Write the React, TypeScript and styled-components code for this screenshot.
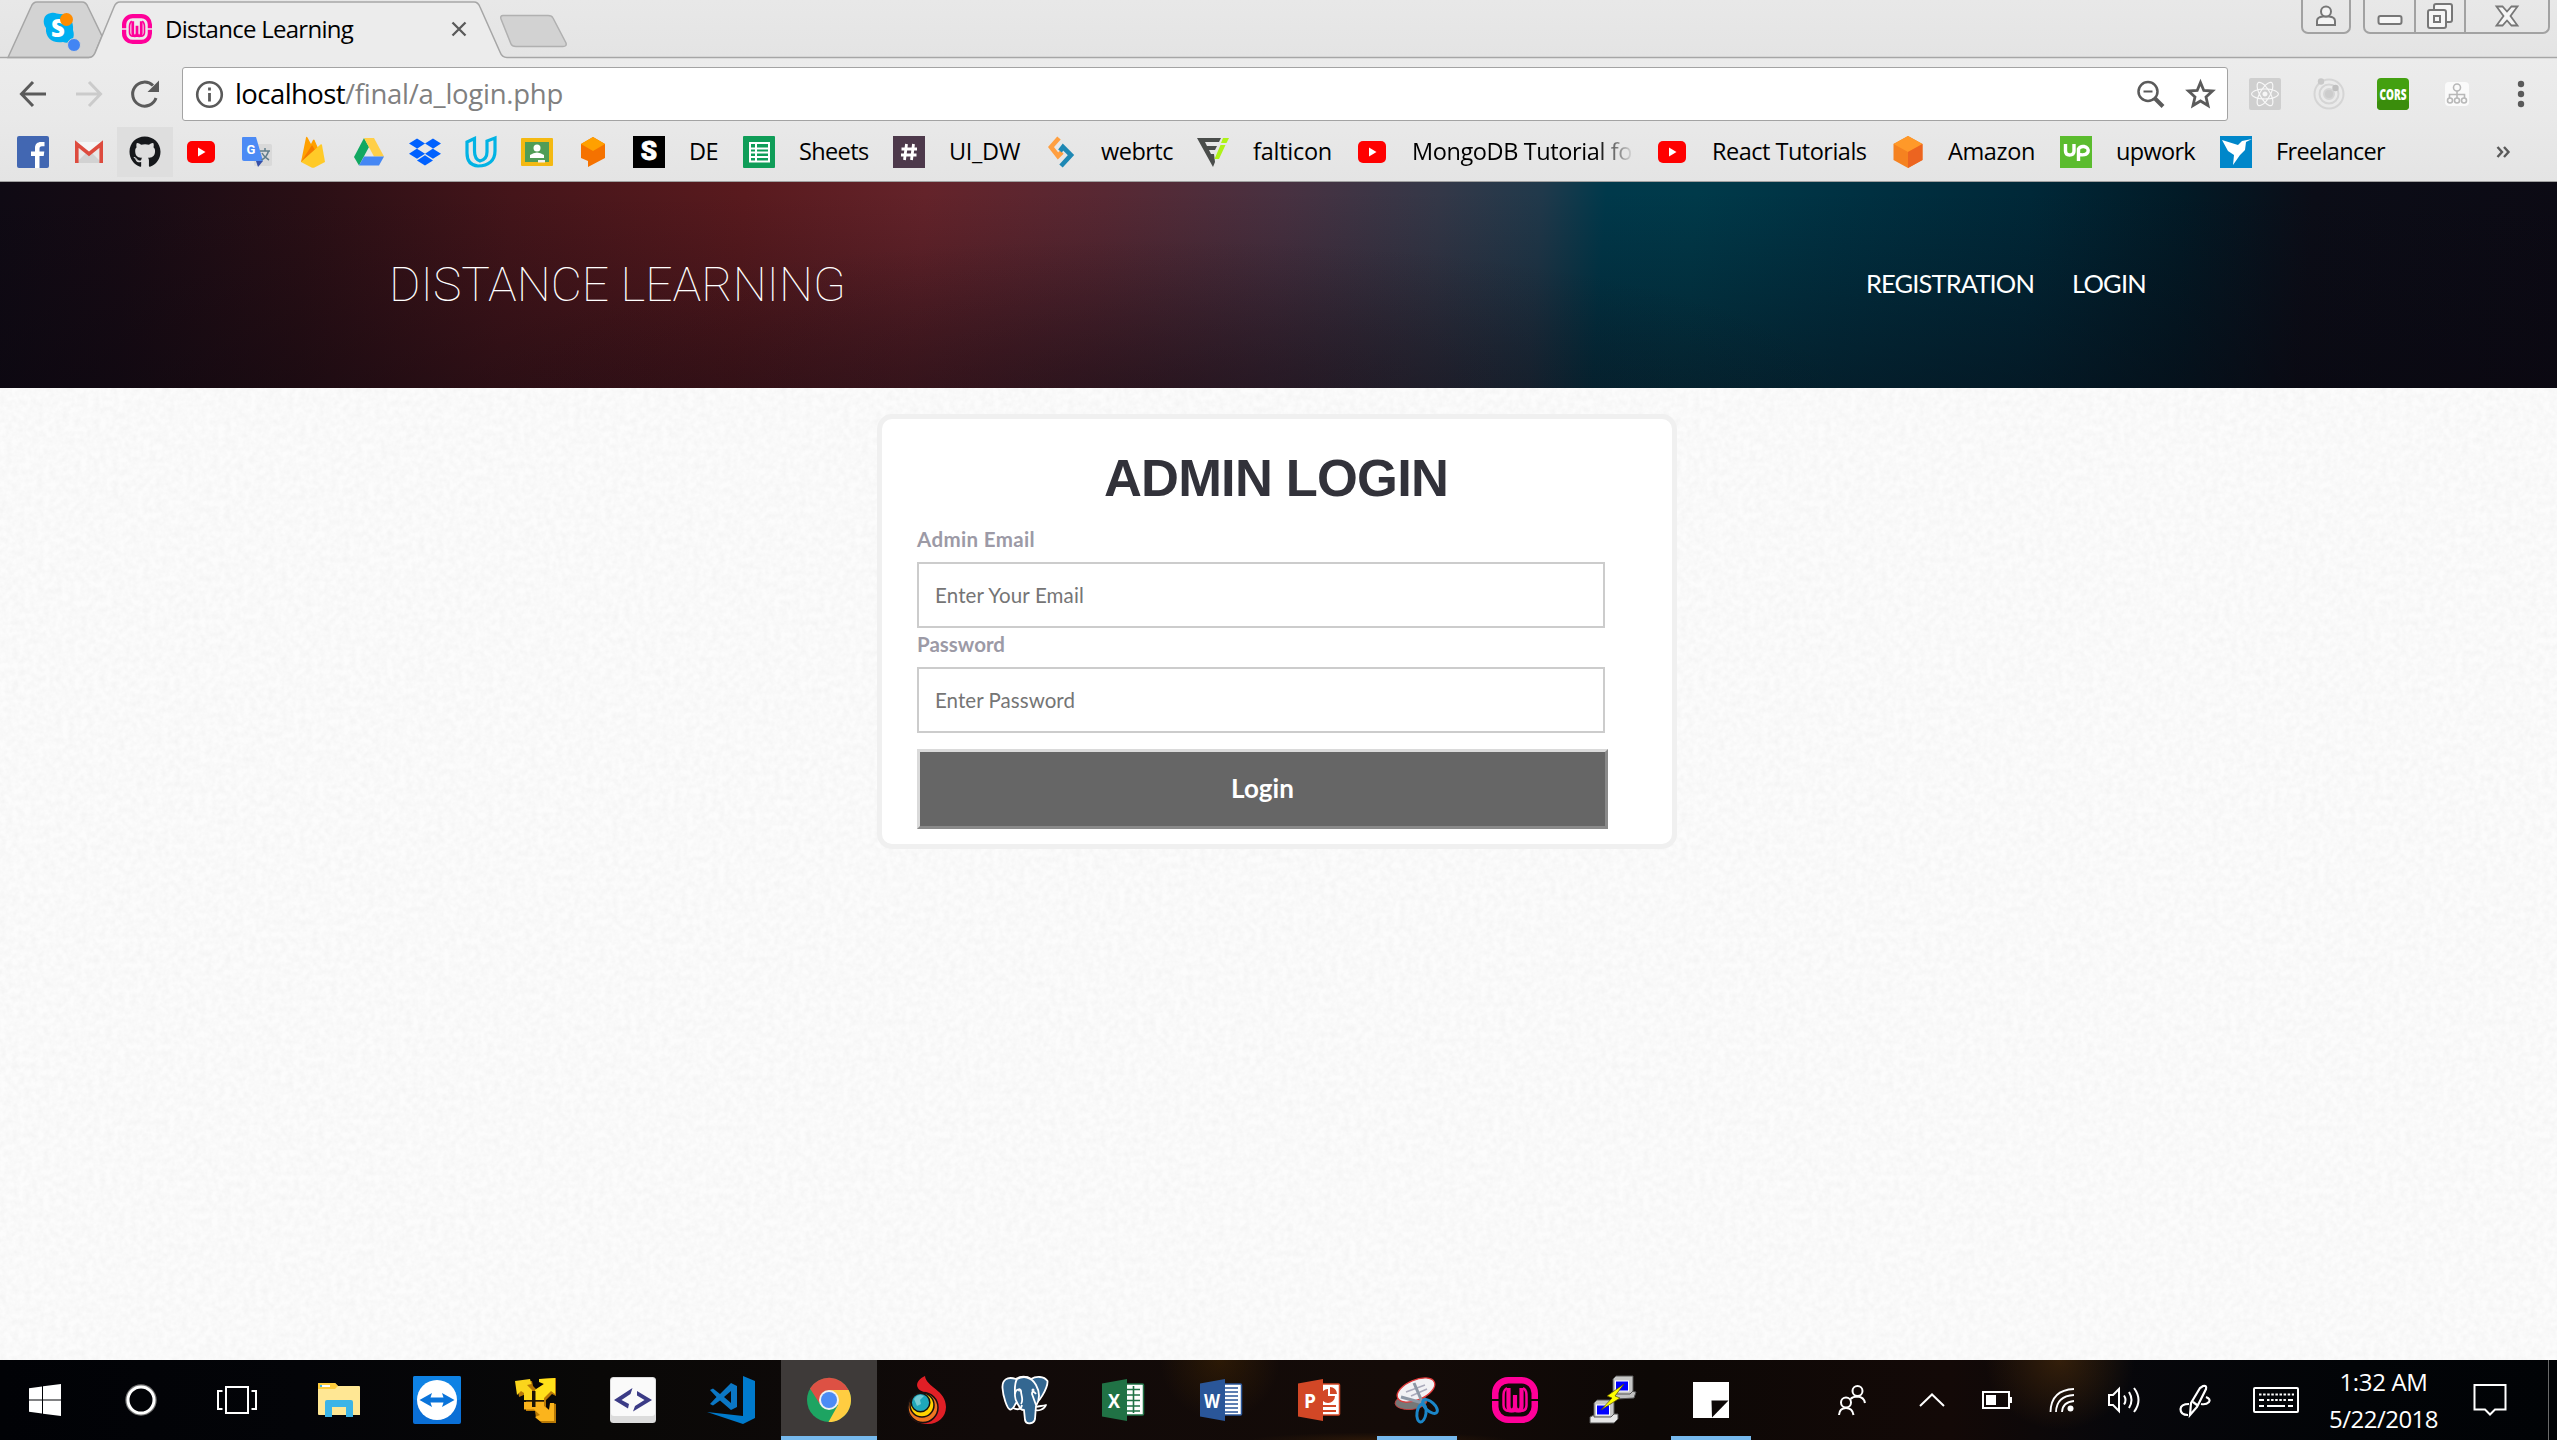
import React, { useLayoutEffect, useRef, useState } from "react";
import styled, { createGlobalStyle, css } from "styled-components";
import { FaGithub, FaDropbox, FaReact } from "react-icons/fa";

const uiFont = `"Open Sans", "Noto Sans", sans-serif`;
const pageFont = `Lato, "Open Sans", sans-serif`;

const GlobalStyle = createGlobalStyle`
  * { box-sizing: border-box; }
  html, body { margin: 0; padding: 0; overflow: hidden; background: #fafafa; }
  svg { display: block; flex: none; overflow: visible; }
`;

/* Text whose tracking is adjusted so that it fills a given width. */
const FitBox = styled.span<{ $w: number; $size: number; $color?: string; $weight?: number; $font?: string; $fade?: boolean }>`
  display: block;
  flex: none;
  width: ${(p) => p.$w}px;
  font-family: ${(p) => p.$font || uiFont};
  font-size: ${(p) => p.$size}px;
  font-weight: ${(p) => p.$weight || 400};
  color: ${(p) => p.$color || "#000"};
  line-height: 1.3;
  white-space: pre;
  ${(p) =>
    p.$fade &&
    css`
      mask-image: linear-gradient(90deg, #000 84%, transparent 101%);
    `}
`;

type FitProps = {
  text: string;
  w: number;
  fit?: number;
  size: number;
  color?: string;
  weight?: number;
  font?: string;
  fade?: boolean;
};

function Fit({ text, w, fit, size, color, weight, font, fade }: FitProps) {
  const ref = useRef<HTMLSpanElement>(null);
  const [spacing, setSpacing] = useState(0);
  useLayoutEffect(() => {
    if (!ref.current) return;
    const natural = ref.current.getBoundingClientRect().width;
    setSpacing(((fit || w) - natural) / text.length);
  }, [text, w, fit]);
  return (
    <FitBox $w={w} $size={size} $color={color} $weight={weight} $font={font} $fade={fade}>
      <span ref={ref} style={{ letterSpacing: spacing }}>
        {text}
      </span>
    </FitBox>
  );
}

const Screen = styled.div`
  width: 2557px;
  height: 1440px;
  display: flex;
  flex-direction: column;
  overflow: hidden;
  font-family: ${uiFont};
`;

/* ---------- browser chrome ---------- */
const Chrome = styled.div`
  flex: none;
  height: 182px;
  display: flex;
  flex-direction: column;
  border-bottom: 1px solid #a0a0a0;
  background: linear-gradient(#e8e8e8 0, #e4e4e4 56px, #ececec 58px, #e9e9e9 118px, #e4e4e4 181px);
`;
const TabStrip = styled.div`
  position: relative;
  height: 58px;
  flex: none;
  display: flex;
  justify-content: space-between;
  align-items: flex-start;
`;
const TabShapes = styled.svg`
  position: absolute;
  left: 0;
  top: 0;
`;
const TabContent = styled.div`
  position: relative;
  display: flex;
  align-items: center;
  height: 58px;
  padding-left: 43px;
`;
const SkypeSlot = styled.div`
  width: 79px;
  padding-top: 8px;
`;
const TabTitle = styled.div`
  margin-left: 13px;
  width: 286px;
`;
const WindowButtons = styled.div`
  position: relative;
  display: flex;
  gap: 12px;
  margin-right: 7px;
`;
const ButtonGroup = styled.div`
  height: 34px;
  display: flex;
  border: 2px solid #a2a2a2;
  border-top: 0;
  border-radius: 0 0 7px 7px;
`;
const WindowButton = styled.div<{ $w: number }>`
  width: ${(p) => p.$w}px;
  display: flex;
  justify-content: center;
  align-items: center;
  & + & {
    border-left: 2px solid #a2a2a2;
  }
`;
const Toolbar = styled.div`
  height: 64px;
  display: flex;
  align-items: center;
  padding-top: 8px;
  padding-left: 18px;
`;
const NavButton = styled.div<{ $w: number }>`
  width: ${(p) => p.$w}px;
`;
const AddressBar = styled.div`
  width: 2046px;
  height: 54px;
  display: flex;
  align-items: center;
  padding: 0 11px 0 12px;
  background: #fff;
  border: 1px solid #a3a3a3;
  border-radius: 3px;
`;
const Spacer = styled.div`
  flex: 1;
`;
const UrlText = styled.div`
  display: flex;
  margin-left: 11px;
`;
const StarSlot = styled.div`
  margin-left: 20px;
`;
const Extensions = styled.div`
  display: flex;
  align-items: center;
  margin-left: 21px;
  gap: 32px;
`;
const MenuSlot = styled.div`
  margin-left: 12px;
`;
const Bookmarks = styled.div`
  flex: 1;
  display: flex;
  align-items: center;
  gap: 24px;
  padding: 0 46px 0 17px;
`;
const Bookmark = styled.div<{ $hover?: boolean; $labelled?: boolean }>`
  display: flex;
  align-items: center;
  gap: 24px;
  ${(p) =>
    p.$hover &&
    css`
      background: #dedede;
      margin: 0 -12px;
      padding: 9px 12px;
    `}
`;

function TabBackground() {
  return (
    <TabShapes width="2557" height="60" viewBox="0 0 2557 60" fill="none">
      <path d="M8 57.5 L31 7 Q33 2 37 2 H82 Q86 2 88 7 L102 36 L95 53 Q93 57.5 89 57.5 Z" fill="#d3d3d3" stroke="#a6a6a6" strokeWidth="1.5" />
      <path d="M89 60 V57.5 Q93 57.5 95 53 L114 7 Q116 2 120 2 H474 Q478 2 480 7 L500 52 Q502 57.5 507 57.5 V60Z" fill="#ececec" />
      <path d="M0 57.5 H89 Q93 57.5 95 53 L114 7 Q116 2 120 2 H474 Q478 2 480 7 L500 52 Q502 57.5 507 57.5 H2557" stroke="#a6a6a6" strokeWidth="1.5" />
      <path d="M503 15.500 H548 Q552 15.500 553 18 L566 43 Q567 46.500 563 46.500 H516 Q512 46.500 511 44 L501 19 Q500 15.500 503 15.500Z" fill="#d2d2d2" stroke="#b0b0b0" strokeWidth="1.5" />
    </TabShapes>
  );
}

function SkypeIcon() {
  return (
    <svg width="38" height="40" viewBox="0 0 38 40">
      <path d="M8 0 C12 -1 14 1 17 1 C26 1 31 8 30 17 C33 26 27 32 20 29 C9 31 2 24 3 15 C-1 10 0 1 8 0Z" fill="#00aff0" />
      <text x="15" y="24" textAnchor="middle" fontFamily="Open Sans" fontWeight="800" fontSize="24" fill="#fff">S</text>
      <circle cx="23.500" cy="6.500" r="6.500" fill="#ff8c00" />
      <circle cx="31" cy="32" r="6.500" fill="#4285f4" stroke="#d3d3d3" />
    </svg>
  );
}

function WampIcon({ size, gap }: { size: number; gap: string }) {
  return (
    <svg width={size} height={size} viewBox="0 0 46 46">
      <rect x="3.250" y="3.250" width="39.500" height="39.500" rx="13" fill="none" stroke="#ff0099" strokeWidth="6.500" />
      <path d="M15 11 C11.500 13 11.500 16 11.500 20 V28 Q11.500 34 17 34 H29 Q34.500 34 34.500 28 V20 C34.500 16 34.500 13 31 11" fill="none" stroke="#ff0099" strokeWidth="2.500" />
      <path d="M16.500 11 V29 Q16.500 33.500 19.500 33.500 Q23 33.500 23 29 V18 V29 Q23 33.500 26.500 33.500 Q29.500 33.500 29.500 29 V11" fill="none" stroke="#ff0099" strokeWidth="4.200" />
      <path d="M0 23 H9.500 M36.500 23 H46" stroke={gap} strokeWidth="2" />
    </svg>
  );
}

const YouTube = () => (
  <svg width="32" height="32" viewBox="0 0 32 32">
    <rect x="2" y="5" width="28" height="22" rx="5" fill="#f00" />
    <path d="M13 11.500 L20.500 16 L13 20.500Z" fill="#fff" />
  </svg>
);

const bookmarkIcons: Record<string, React.ReactNode> = {
  facebook: (
    <svg width="32" height="32" viewBox="0 0 32 32">
      <rect width="32" height="32" rx="2" fill="#4267b2" />
      <path d="M18 32 V20 H14 V15.500 H18 V12 C18 8 20.500 6 24 6 H27.500 V10.300 H25 C23 10.300 22.500 11.200 22.500 12.700 V15.500 H27.300 L26.700 20 H22.500 V32Z" fill="#fff" />
    </svg>
  ),
  gmail: (
    <svg width="32" height="32" viewBox="0 0 32 32">
      <path d="M3 6 H29 V27 H3Z" fill="#e8e8e8" />
      <path d="M3 27 L16 14 L29 27Z" fill="#d2d2d2" />
      <path d="M3 6 H29 L16 17Z" fill="#f5f5f5" />
      <path d="M3.800 27 V8 L16 18 L28.200 8 V27" fill="none" stroke="#dd4b3e" strokeWidth="3.600" />
    </svg>
  ),
  github: <FaGithub size={32} color="#16181b" />,
  youtube: <YouTube />,
  translate: (
    <svg width="32" height="32" viewBox="0 0 32 32">
      <rect x="13" y="8" width="18" height="22" rx="1.500" fill="#d9d9d9" />
      <path d="M15 25 H22 L17 31Z" fill="#3650a8" />
      <path d="M2 1 H15 L22 25 H3 Q1 25 1 23 V2 Q1 1 2 1Z" fill="#4c8bf5" />
      <path d="M19 15 H29 M24 12 V15 M27.500 15 Q26 21 20.500 24 M21 17 Q23 21 28 24" stroke="#607d8b" strokeWidth="1.500" fill="none" />
      <text x="10" y="18" textAnchor="middle" fontFamily="Roboto" fontWeight="700" fontSize="13" fill="#fff">G</text>
    </svg>
  ),
  firebase: (
    <svg width="32" height="32" viewBox="0 0 32 32">
      <path d="M4 26 L9 1.500 Q9.500 0 10.500 1.500 L14 8 L16 4 Q17 3 17.500 4 L27 26Z" fill="#ffa000" />
      <path d="M4 26 L15 9 L18 14Z" fill="#f57c00" />
      <path d="M4 26 L23.500 8.500 Q24.800 8 25 9 L28 26 L17.500 31.500 Q16 32 14.500 31.500Z" fill="#ffca28" />
    </svg>
  ),
  drive: (
    <svg width="32" height="32" viewBox="0 0 32 32">
      <path d="M11 2 L1 21 L6 29.500 L16 11Z" fill="#11a861" />
      <path d="M11 2 H21 L31 20.500 H21Z" fill="#ffcf48" />
      <path d="M11 20.500 H31 L26 29.500 H6Z" fill="#4587f4" />
    </svg>
  ),
  dropbox: <FaDropbox size={32} color="#0061ff" />,
  udacity: (
    <svg width="32" height="32" viewBox="0 0 32 32" fill="none" stroke="#02b3e4" strokeWidth="3.200">
      <path d="M9.500 2.500 L2 6 V17 C2 25 6 29.500 13 30 C24 30 30 24 30 15 V2 L22 5 V16 C22 20.500 19.500 24 15 25 C10.500 23.500 9.500 19 9.500 15Z" />
    </svg>
  ),
  classroom: (
    <svg width="32" height="32" viewBox="0 0 32 32">
      <rect y="2" width="32" height="28" rx="1" fill="#f4b912" />
      <rect x="4" y="6" width="24" height="20" fill="#519d57" />
      <circle cx="16" cy="12" r="3.500" fill="#fff" />
      <path d="M9 22 V19 Q16 14 23 19 V22Z" fill="#fff" />
      <rect x="17" y="24" width="7" height="2.500" fill="#f1f1f1" />
    </svg>
  ),
  orange: (
    <svg width="32" height="32" viewBox="0 0 32 32">
      <path d="M16 1 L28 8 V22 L11 31 V25 L4 22 V8Z" fill="#f57200" />
      <path d="M16 1 L28 8 L16 15 L4 8Z" fill="#ffa000" />
    </svg>
  ),
  s: (
    <svg width="32" height="32" viewBox="0 0 32 32">
      <rect width="32" height="32" fill="#000" />
      <text x="16" y="24" textAnchor="middle" fontFamily="Roboto" fontWeight="900" fontSize="26" fill="#fff" stroke="#fff" strokeWidth="0.800">S</text>
    </svg>
  ),
  sheets: (
    <svg width="32" height="32" viewBox="0 0 32 32">
      <rect width="32" height="32" rx="1" fill="#0f9d58" />
      <path d="M7 7 H26 V25.500 H7Z M7 12.500 H26 M7 16.500 H26 M7 21 H26 M13 7 V25" fill="none" stroke="#fff" strokeWidth="2" />
    </svg>
  ),
  hash: (
    <svg width="32" height="32" viewBox="0 0 32 32">
      <rect width="32" height="32" fill="#4d394b" />
      <path d="M13.500 8 L11.500 24 M20.500 8 L18.500 24 M8.500 13 H24 M8 19 H23.500" stroke="#fff" strokeWidth="2.800" />
    </svg>
  ),
  webrtc: (
    <svg width="32" height="32" viewBox="0 0 32 32">
      <path d="M14 2 L6 11 L13 20 L17 16" fill="none" stroke="#ff9f40" strokeWidth="4.600" />
      <path d="M15 15 L18 11 L26 19 L16 30" fill="none" stroke="#1e88b4" strokeWidth="4.600" />
    </svg>
  ),
  flaticon: (
    <svg width="32" height="32" viewBox="0 0 32 32">
      <path d="M0 2 H24 L22 6 H8 L10 10 H20 L18 14 H12 L14 18 H17 L18 26 L16 31Z" fill="#4a4d4b" />
      <path d="M26 2 H32 L29.500 7 H24Z M23.500 9 H28.500 L22 23 H17.500Z" fill="#aef217" />
    </svg>
  ),
  amazon: (
    <svg width="32" height="32" viewBox="0 0 32 32">
      <path d="M16 0 L30.500 8 V24 L16 32 L1.500 24 V8Z" fill="#f58220" />
      <path d="M16 0 L30.500 8 L16 16 L1.500 8Z" fill="#ff9929" />
      <path d="M30.500 8 V24 L16 32 V16Z" fill="#ec6420" />
    </svg>
  ),
  upwork: (
    <svg width="32" height="32" viewBox="0 0 32 32">
      <rect width="32" height="32" fill="#5bbc2e" />
      <path d="M5.500 8 V15 Q5.500 19 9.500 19 Q14 19 14 15 V8 M18.500 25 V13 Q20 10 24 10.500 Q29 11.500 28 16 Q26 20 19 18.500" fill="none" stroke="#fff" strokeWidth="3.400" />
    </svg>
  ),
  freelancer: (
    <svg width="32" height="32" viewBox="0 0 32 32">
      <rect width="32" height="32" fill="#0087ca" />
      <path d="M2 4 L18 9 L22 5 L32 3 L26 6 L25 14 L20 19 L13 29 L14 19 L8 15Z" fill="#fff" />
    </svg>
  ),
};

const bookmarks: { icon: string; label?: string; w?: number; fit?: number; fade?: boolean }[] = [
  { icon: "facebook" },
  { icon: "gmail" },
  { icon: "github" },
  { icon: "youtube" },
  { icon: "translate" },
  { icon: "firebase" },
  { icon: "drive" },
  { icon: "dropbox" },
  { icon: "udacity" },
  { icon: "classroom" },
  { icon: "orange" },
  { icon: "s", label: "DE", w: 30, fit: 29 },
  { icon: "sheets", label: "Sheets", w: 70, fit: 69.5 },
  { icon: "hash", label: "UI_DW", w: 72, fit: 71 },
  { icon: "webrtc", label: "webrtc", w: 72 },
  { icon: "flaticon", label: "falticon", w: 79 },
  { icon: "youtube", label: "MongoDB Tutorial fo", w: 220, fit: 220, fade: true },
  { icon: "youtube", label: "React Tutorials", w: 156, fit: 154.5 },
  { icon: "amazon", label: "Amazon", w: 88, fit: 87 },
  { icon: "upwork", label: "upwork", w: 80, fit: 79 },
  { icon: "freelancer", label: "Freelancer", w: 110, fit: 109 },
];

function BrowserChrome() {
  return (
    <Chrome>
      <TabStrip>
        <TabBackground />
        <TabContent>
          <SkypeSlot>
            <SkypeIcon />
          </SkypeSlot>
          <WampIcon size={30} gap="#ececec" />
          <TabTitle>
            <Fit text="Distance Learning" w={188} size={24} />
          </TabTitle>
          <svg width="16" height="16" viewBox="0 0 16 16">
            <path d="M1.500 1.500 L14.500 14.500 M14.500 1.500 L1.500 14.500" stroke="#5a5a5a" strokeWidth="2.300" />
          </svg>
        </TabContent>
        <WindowButtons>
          <ButtonGroup>
            <WindowButton $w={46}>
              <svg width="22" height="22" viewBox="0 0 22 22" fill="#f4f4f4" stroke="#777" strokeWidth="2">
                <path d="M2 20 V16 Q2 12 8 11.500 H14 Q20 12 20 16 V20Z" />
                <circle cx="11" cy="6.500" r="5" />
              </svg>
            </WindowButton>
          </ButtonGroup>
          <ButtonGroup>
            <WindowButton $w={49}>
              <svg width="26" height="30" viewBox="0 0 26 30">
                <rect x="1.500" y="15" width="23" height="8" rx="2" fill="#f6f6f6" stroke="#777" strokeWidth="2" />
              </svg>
            </WindowButton>
            <WindowButton $w={50}>
              <svg width="28" height="28" viewBox="0 0 28 28" fill="#f6f6f6" stroke="#777" strokeWidth="2">
                <rect x="8" y="2" width="18" height="18" rx="2" />
                <rect x="2" y="8" width="18" height="18" rx="2" />
                <rect x="8" y="14" width="6" height="6" />
              </svg>
            </WindowButton>
            <WindowButton $w={84}>
              <svg width="24" height="22" viewBox="0 0 24 22">
                <path d="M1.500 1.500 H7.500 L12 6.500 L16.500 1.500 H22.500 L15.500 11 L22.500 20.500 H16.500 L12 15.500 L7.500 20.500 H1.500 L8.500 11Z" fill="#f6f6f6" stroke="#777" strokeWidth="1.800" />
              </svg>
            </WindowButton>
          </ButtonGroup>
        </WindowButtons>
      </TabStrip>

      <Toolbar>
        <NavButton $w={57}>
          <svg width="30" height="28" viewBox="0 0 30 28" fill="none" stroke="#5a5a5a" strokeWidth="3">
            <path d="M28 14 H4 M15 2 L3.500 14 L15 26" />
          </svg>
        </NavButton>
        <NavButton $w={56}>
          <svg width="30" height="28" viewBox="0 0 30 28" fill="none" stroke="#cbcbcb" strokeWidth="3">
            <path d="M1 14 H25 M14 2 L25.500 14 L14 26" />
          </svg>
        </NavButton>
        <NavButton $w={51}>
          <svg width="30" height="28" viewBox="0 0 30 28" fill="none" stroke="#5a5a5a" strokeWidth="3">
            <path d="M25 18 A12 12 0 1 1 22 5.500" />
            <path d="M28 0.500 V12 H16.500Z" fill="#5a5a5a" stroke="none" />
          </svg>
        </NavButton>
        <AddressBar>
          <svg width="29" height="29" viewBox="0 0 29 29">
            <circle cx="14.500" cy="14.500" r="12.300" fill="none" stroke="#5a5a5a" strokeWidth="2.600" />
            <path d="M14.500 7.500 V10.500 M14.500 13 V21.500" stroke="#5a5a5a" strokeWidth="2.800" />
          </svg>
          <UrlText>
            <Fit text="localhost" w={110} size={27.5} />
            <Fit text="/final/a_login.php" w={218} size={27.5} color="#808080" />
          </UrlText>
          <Spacer />
          <svg width="28" height="29" viewBox="0 0 28 29" fill="none" stroke="#5a5a5a">
            <circle cx="11" cy="11.500" r="9.500" strokeWidth="2.500" />
            <path d="M6.500 11.500 H15.500" strokeWidth="2" />
            <path d="M17.500 18 L26 26.500" strokeWidth="4" />
          </svg>
          <StarSlot>
            <svg width="31" height="30" viewBox="0 0 31 30">
              <path d="M15.500 3.500 L18.800 11.500 L27.500 12 L21 18 L23 26.500 L15.500 22 L8 26.500 L10 18 L3.500 12 L12.200 11.500Z" fill="none" stroke="#5a5a5a" strokeWidth="2.800" />
            </svg>
          </StarSlot>
        </AddressBar>
        <Extensions>
          <svg width="32" height="32" viewBox="0 0 32 32">
            <rect width="32" height="32" rx="2" fill="#cfcfcf" />
            <g transform="translate(2 2)">
              <FaReact size={28} color="#f7f7f7" />
            </g>
          </svg>
          <svg width="32" height="32" viewBox="0 0 32 32" fill="none" stroke="#d5d5d5" strokeWidth="2">
            <circle cx="16" cy="16" r="14.500" />
            <circle cx="16" cy="16" r="9.500" />
            <circle cx="16" cy="16" r="5" fill="#ccc" />
            <circle cx="8" cy="3.500" r="3.200" fill="#c9c9c9" stroke="none" />
            <circle cx="22.500" cy="10" r="3.200" fill="#c0c0c0" stroke="none" />
          </svg>
          <svg width="32" height="32" viewBox="0 0 32 32">
            <rect width="32" height="32" rx="4" fill="#43a010" />
            <rect y="22" width="32" height="10" rx="4" fill="#3a8d0c" />
            <text x="16" y="22" textAnchor="middle" textLength="27" lengthAdjust="spacingAndGlyphs" fontFamily="Open Sans" fontWeight="800" fontSize="16" fill="#fff">CORS</text>
          </svg>
          <svg width="32" height="32" viewBox="0 0 32 32" fill="none" stroke="#b8b8b8" strokeWidth="1.600">
            <rect x="4" y="4" width="24" height="24" rx="4" fill="#fafafa" stroke="none" />
            <circle cx="16" cy="9.500" r="3.500" />
            <path d="M16 13 V20 M8.500 20 V16.500 H23.500 V20" />
            <circle cx="9" cy="22.500" r="2.500" />
            <circle cx="16" cy="22.500" r="2.500" />
            <circle cx="23" cy="22.500" r="2.500" />
          </svg>
          <MenuSlot>
            <svg width="8" height="28" viewBox="0 0 8 28" fill="#5a5a5a">
              <circle cx="4" cy="4" r="3.200" />
              <circle cx="4" cy="14" r="3.200" />
              <circle cx="4" cy="24" r="3.200" />
            </svg>
          </MenuSlot>
        </Extensions>
      </Toolbar>

      <Bookmarks>
        {bookmarks.map((b, i) => (
          <Bookmark key={i} $hover={b.icon === "github"}>
            {bookmarkIcons[b.icon]}
            {b.label && <Fit text={b.label} w={b.w!} fit={b.fit} size={23.5} fade={b.fade} />}
          </Bookmark>
        ))}
        <Spacer />
        <svg width="15" height="12" viewBox="0 0 15 12" fill="none" stroke="#5a5a5a" strokeWidth="2.400">
          <path d="M1.500 1 L6 6 L1.500 11 M8 1 L12.500 6 L8 11" />
        </svg>
      </Bookmarks>
    </Chrome>
  );
}

/* ---------- web page ---------- */
const Page = styled.main`
  position: relative;
  flex: 1;
  display: flex;
  flex-direction: column;
  background: #fcfcfc;
`;
const PaperGrain = styled.svg`
  position: absolute;
  inset: 0;
  width: 100%;
  height: 100%;
`;
const Banner = styled.header`
  position: relative;
  flex: none;
  height: 206px;
  display: flex;
  align-items: center;
  justify-content: space-between;
  padding: 0 411px 0 389px;
  background:
    radial-gradient(ellipse 700px 150px at 1150px 206px, rgba(20, 8, 16, 0.3), transparent),
    linear-gradient(rgba(9, 6, 14, 0) 5%, rgba(9, 6, 14, 0.42) 100%),
    linear-gradient(
      94deg,
      #0f0a14 0%,
      #170b14 5%,
      #2a0f15 12%,
      #45151a 20%,
      #591a1e 29%,
      #64232a 36%,
      #582833 43%,
      #483141 50%,
      #343848 56%,
      #20394b 60%,
      #00394b 62.5%,
      #003a4a 66%,
      #003142 72%,
      #002838 79%,
      #021a26 85%,
      #0b0d17 90%,
      #0c0a14 100%
    );
`;
const Menu = styled.nav`
  display: flex;
  gap: 38px;
  padding-bottom: 2px;
`;
const Card = styled.section`
  position: relative;
  width: 800px;
  height: 435px;
  margin: 26px 0 0 877px;
  padding: 31px 35px 0;
  background: #fff;
  border: 5px solid #f0f0f0;
  border-radius: 15px;
`;
const Title = styled.h1`
  margin: 0 2px 0 0;
  text-align: center;
  font: 700 52.500px/56px "Liberation Sans", Arial, sans-serif;
  letter-spacing: -0.8px;
  color: #32323a;
`;
const FieldLabel = styled.label<{ $gap: number }>`
  display: block;
  margin-top: ${(p) => p.$gap}px;
  height: 26px;
`;
const Field = styled.div`
  width: 688px;
  height: 66px;
  margin-top: 10px;
  padding-left: 16px;
  display: flex;
  align-items: center;
  background: #fff;
  border: 2px solid #ccc;
`;
const Submit = styled.button`
  width: 691px;
  height: 80px;
  margin: 16px 0 0;
  padding: 0;
  display: flex;
  align-items: center;
  justify-content: center;
  text-align: left;
  background: #666;
  border: 3px solid;
  border-color: #dadada #8a8a8a #8a8a8a #dadada;
`;

function WebPage() {
  return (
    <Page>
      <PaperGrain>
        <filter id="grain" x="0" y="0" width="100%" height="100%">
          <feTurbulence type="fractalNoise" baseFrequency="0.16" numOctaves="3" seed="4" />
          <feColorMatrix values="0 0 0 0 0  0 0 0 0 0  0 0 0 0 0  0.05 0 0 0 -0.014" />
        </filter>
        <rect width="100%" height="100%" filter="url(#grain)" />
      </PaperGrain>
      <Banner>
        <Fit text="DISTANCE LEARNING" w={457} size={48} weight={100} color="#fff" font="Roboto, sans-serif" />
        <Menu>
          <Fit text="REGISTRATION" w={168} size={25.5} color="#fff" font={pageFont} />
          <Fit text="LOGIN" w={74} size={25.5} color="#fff" font={pageFont} />
        </Menu>
      </Banner>
      <Card>
        <Title>ADMIN LOGIN</Title>
        <FieldLabel $gap={20}>
          <Fit text="Admin Email" w={118} size={20.5} weight={700} color="#9c9aa6" font={pageFont} />
        </FieldLabel>
        <Field>
          <Fit text="Enter Your Email" w={149} size={20.5} color="#757575" font={pageFont} />
        </Field>
        <FieldLabel $gap={3}>
          <Fit text="Password" w={88} size={20.5} weight={700} color="#9c9aa6" font={pageFont} />
        </FieldLabel>
        <Field>
          <Fit text="Enter Password" w={140} size={20.5} color="#757575" font={pageFont} />
        </Field>
        <Submit>
          <Fit text="Login" w={63} size={26} weight={700} color="#fff" font={pageFont} />
        </Submit>
      </Card>
    </Page>
  );
}

/* ---------- taskbar ---------- */
const Taskbar = styled.footer`
  flex: none;
  height: 80px;
  display: flex;
  background:
    radial-gradient(ellipse 75px 70px at 2060px 0, rgba(92, 54, 12, 0.5), transparent),
    radial-gradient(circle at 1220px 0, rgba(90, 52, 0, 0.35), transparent 60px),
    radial-gradient(ellipse at 1380px 80px, rgba(74, 40, 8, 0.45), transparent 130px),
    linear-gradient(90deg, #010206 0, #030408 300px, #090807 600px, #110a09 1000px, #140b08 1400px, #0d0806 1650px, #130907 1950px, #07070b 2120px, #020407 2350px, #010306 100%);
`;
const TaskCell = styled.div<{ $w: number; $active?: boolean; $line?: number }>`
  width: ${(p) => p.$w}px;
  flex: none;
  display: flex;
  align-items: center;
  justify-content: center;
  background: ${(p) =>
    p.$line
      ? `linear-gradient(#76b9ed, #76b9ed) center bottom / ${p.$line}px 4px no-repeat${
          p.$active ? ", linear-gradient(#3e3a39, #3e3a39) center / 96px 80px no-repeat" : ""
        }`
      : "none"};
`;
const Pinned = styled.div`
  display: flex;
  margin-left: 8px;
`;
const Tray = styled.div`
  display: flex;
  margin-left: 52px;
`;
const Clock = styled.div`
  width: 151px;
  display: flex;
  flex-direction: column;
  align-items: center;
  gap: 6px;
  padding-top: 6px;
`;
const ShowDesktop = styled.div`
  margin-left: 27px;
  width: 9px;
  border-left: 1px solid #6a6a6a;
`;

const OfficeIcon = ({ color, letter, children }: { color: string; letter: string; children: React.ReactNode }) => (
  <svg width="48" height="48" viewBox="0 0 48 48">
    <rect x="25" y="8" width="19.500" height="31" rx="1" fill="#fff" stroke={color} strokeWidth="1.500" />
    {children}
    <path d="M3 7.500 L28 3 V45 L3 40.500Z" fill={color} />
    <text x="15" y="31.500" textAnchor="middle" fontFamily="Open Sans" fontWeight="700" fontSize="20" textLength={letter === "W" ? 16 : 12} lengthAdjust="spacingAndGlyphs" fill="#fff">
      {letter}
    </text>
  </svg>
);

const tasks: { key: string; line?: number; active?: boolean; icon: React.ReactNode }[] = [
  {
    key: "explorer",
    icon: (
      <svg width="48" height="48" viewBox="0 0 48 48">
        <path d="M3 8 Q3 7 4 7 H20 L23 10 H44 Q45 10 45 11 V39 H4 Q3 39 3 38Z" fill="#ffe794" />
        <path d="M3 8 Q3 7 4 7 H20 L23 10 L20 13 H3Z" fill="#ffcd3c" />
        <path d="M5 9 H15 V11 H5Z" fill="#fff" />
        <path d="M5 9 H7 V11 H5Z" fill="#3cb4e7" />
        <path d="M10 41 V26 Q10 24 12 24 H36 Q38 24 38 26 V41 H31 V31 H17 V41Z" fill="#3cb4e7" />
      </svg>
    ),
  },
  {
    key: "teamviewer",
    icon: (
      <svg width="48" height="48" viewBox="0 0 48 48">
        <rect width="48" height="48" rx="2" fill="#0a6fd6" />
        <rect width="48" height="24" rx="2" fill="#0e82e4" />
        <circle cx="24" cy="24" r="20" fill="#fff" />
        <path d="M6.500 24 L19 17 L17.500 21.500 H30.500 L29 17 L41.500 24 L29 31 L30.500 26.500 H17.500 L19 31Z" fill="#0a74da" />
      </svg>
    ),
  },
  {
    key: "vmware",
    icon: (
      <svg width="48" height="48" viewBox="0 0 48 48">
        <g transform="translate(2 0)">
          <path d="M4 7 L19 5 L20 10 L23 13 L31 8 L28 3 L43 2 V20 L39 18 L33 24 V31 L36 34 L39 27 L43 28 V47 H29 L23 42 L22 35 H13 V18 L6 21Z" fill="#b87805" />
          <path d="M2 5 L17 3 L18.500 8 L14 9 L19 14 V24 H11 V17 L8 15 L4 19Z" fill="#fbd51c" />
          <path d="M26 3 L42 2 V18 L38 15 L31 22 V24 H22 V14 L31 8 L26 6Z" fill="#ffe11a" />
          <path d="M11 26 H31 V30 L36 34 L37 27 H41 V45 H27 L22 41 L27 39 L21 33.500 H11Z" fill="#fbb41c" />
          <path d="M19 15 H22.500 V31 H19Z" fill="#1b1508" />
          <path d="M11 24.800 H31" stroke="#1b1508" strokeWidth="1.500" />
        </g>
      </svg>
    ),
  },
  {
    key: "code",
    icon: (
      <svg width="46" height="46" viewBox="0 0 46 46">
        <rect width="46" height="46" rx="3.500" fill="#dcdcdc" />
        <rect x="1" y="1" width="44" height="38" rx="3" fill="#fafafa" />
        <path d="M22.500 11 L4 23 L18 31.500 L19 27 L11.500 23 L20.500 17Z" fill="#3b3b86" />
        <path d="M27 14 L27 18.500 L34.500 23 L25 29 L23 34.500 L42 23Z" fill="#3b3b86" />
      </svg>
    ),
  },
  {
    key: "vscode",
    icon: (
      <svg width="48" height="48" viewBox="0 0 48 48">
        <path d="M36 0 L48 5 V42 L36 48 L0 36 L36 40Z" fill="#007acc" />
        <path d="M3 14 L6 12.500 L13 18 L24 7 L30 10 V31 L24 34 L13 24.500 L6 29.500 L3 28 L9.500 21Z M24 15 L17 21 L24 27Z" fill="#0b77c5" fillRule="evenodd" />
      </svg>
    ),
  },
  {
    key: "chrome",
    line: 96,
    active: true,
    icon: (
      <svg width="44" height="44" viewBox="0 0 44 44">
        <circle cx="22" cy="22" r="22" fill="#1da462" />
        <path d="M22 12 H41.600 A22 22 0 0 1 21.500 44 L31 27Z" fill="#ffcd41" />
        <path d="M3 10.500 A22 22 0 0 1 41.600 12 H22 L12.500 25.500Z" fill="#dd5144" />
        <circle cx="22" cy="22" r="10" fill="#f1f1f1" />
        <circle cx="22" cy="22" r="8" fill="#4c8bf5" />
      </svg>
    ),
  },
  {
    key: "torch",
    icon: (
      <svg width="48" height="48" viewBox="0 0 48 48">
        <path d="M22 0 C23 11 43 14 43 31 C43 41 35 48 25 48 C14 48 6 43 5 34 L14 22 L25 17 C11 15 11 5 22 0Z" fill="#e01f26" />
        <circle cx="20" cy="31.500" r="15" fill="#ef7622" stroke="#17100f" strokeWidth="1.500" />
        <circle cx="19" cy="29" r="12" fill="#ffd300" stroke="#17100f" strokeWidth="1.500" />
        <circle cx="17.500" cy="26.500" r="9.300" fill="#1fa7ba" stroke="#17100f" strokeWidth="1.500" />
        <path d="M11 23 Q15 17 21 20 L17 24 L18 28 L14 30Z" fill="#73cbd5" />
      </svg>
    ),
  },
  {
    key: "postgres",
    icon: (
      <svg width="48" height="48" viewBox="0 0 48 48" fill="#336791" stroke="#fff" strokeWidth="1.800" strokeLinejoin="round">
        <path d="M15 3 C6 0 1 4 1.500 12 C2 20 6 33 9 33.500 C12 34 14 29 15 27 L30 30 C38 29 47 11 46.500 5 C43 0 35 0 30 3 C26 0 19 0 15 3Z" />
        <path d="M16 3 C13 8 14 14 14 20 C14 25 17 28 18 30 C19 34 23 34 23 34 L24 44 C25 49 33 48 34 43 L35 30 C38 25 40 18 35 9 C30 0 22 0 16 3Z" />
        <path d="M14 18 C14 13 20 12 20 15 C20 20 23 24 20 28 M35 18 C33 15 31 15 31 18 L35 29 M35 31 C38 30 42 30 45 29 C43 34 37 35 34 34 M12 32 C16 34 20 34 21 29" fill="none" />
        <circle cx="18.500" cy="14" r="0.600" />
        <circle cx="32" cy="14" r="0.600" />
      </svg>
    ),
  },
  {
    key: "excel",
    icon: (
      <OfficeIcon color="#207245" letter="X">
        <path d="M28 13.500 H41 M28 19 H41 M28 24.500 H41 M28 30 H41 M28 35 H41 M34.500 10 V37" stroke="#207245" strokeWidth="1.600" />
      </OfficeIcon>
    ),
  },
  {
    key: "word",
    icon: (
      <OfficeIcon color="#2a5699" letter="W">
        <path d="M28 12 H41 M28 16 H41 M28 20 H41 M28 24 H41 M28 28 H41 M28 32 H41 M28 36 H41" stroke="#2a5699" strokeWidth="1.500" />
      </OfficeIcon>
    ),
  },
  {
    key: "powerpoint",
    icon: (
      <OfficeIcon color="#d24726" letter="P">
        <path d="M33 13 A7 7 0 1 0 40 20 H33Z M35 11 A7 7 0 0 1 42 18 H35Z M28 29 H41 V31 H28Z M28 34 H41 V36 H28Z" fill="#d24726" />
      </OfficeIcon>
    ),
  },
  {
    key: "snip",
    line: 80,
    icon: (
      <svg width="48" height="48" viewBox="0 0 48 48">
        <ellipse cx="18" cy="26" rx="16" ry="7.500" fill="#777" stroke="#d33a3a" strokeWidth="0.800" transform="rotate(-5 18 26)" />
        <ellipse cx="23" cy="14" rx="20" ry="10" fill="#f1f1f4" stroke="#e03a3a" strokeWidth="1.300" transform="rotate(-23 23 14)" />
        <path d="M13 16 L32 9 M18 20 L34 13" stroke="#aab" strokeWidth="1.500" />
        <path d="M21 7 L30 28 M8 21 L30 27" stroke="#8d97a5" strokeWidth="3" />
        <ellipse cx="28.500" cy="37" rx="4.500" ry="9" fill="none" stroke="#1b86c8" strokeWidth="3" transform="rotate(8 28.500 37)" />
        <ellipse cx="37" cy="30.500" rx="4.500" ry="9" fill="none" stroke="#1b86c8" strokeWidth="3" transform="rotate(-48 37 30.500)" />
      </svg>
    ),
  },
  { key: "wamp", icon: <WampIcon size={46} gap="#140b08" /> },
  {
    key: "putty",
    icon: (
      <svg width="48" height="48" viewBox="0 0 48 48">
        <path d="M22 17 L41 15 L47 16 L45 22 L28 23Z" fill="#c0c0c0" stroke="#555" />
        <path d="M24 3 L27 0 H44 V15 L41 18 H24Z" fill="#c6c6c6" stroke="#555" />
        <rect x="26.500" y="5" width="13" height="10" fill="#00f" stroke="#fff" />
        <path d="M1 41 L7 38 H29 V43 L25 47 H1Z" fill="#e6e6e6" stroke="#555" />
        <path d="M5 27 L8 24 H25 V38 L22 41 H5Z" fill="#c6c6c6" stroke="#555" />
        <rect x="7.500" y="29" width="13" height="10" fill="#00f" stroke="#fff" />
        <path d="M35 8 L18 20 L23 22 L12 34 L31 22 L26 20Z" fill="#ff0" stroke="#554800" strokeWidth="0.700" />
      </svg>
    ),
  },
  {
    key: "sticky",
    line: 80,
    icon: (
      <svg width="36" height="36" viewBox="0 0 36 36">
        <rect width="36" height="36" fill="#fff" />
        <path d="M18.500 18.500 H35.500 L19 35.500Z" fill="#0c0706" />
      </svg>
    ),
  },
];

function TaskbarRow() {
  return (
    <Taskbar>
      <TaskCell $w={90}>
        <svg width="32" height="32" viewBox="0 0 32 32" fill="#fff">
          <path d="M0 4.300 L13 2.500 V15.500 H0Z M14 2.300 L32 0 V15.500 H14Z M0 16.500 H13 V29.500 L0 27.700Z M14 16.500 H32 V32 L14 29.700Z" />
        </svg>
      </TaskCell>
      <TaskCell $w={102}>
        <svg width="32" height="32" viewBox="0 0 32 32" fill="none">
          <circle cx="16" cy="16" r="14.700" stroke="#777" strokeWidth="2" />
          <circle cx="16" cy="16" r="13" stroke="#fff" strokeWidth="3" />
        </svg>
      </TaskCell>
      <TaskCell $w={90}>
        <svg width="40" height="28" viewBox="0 0 40 28" fill="none" stroke="#fff" strokeWidth="2">
          <path d="M9 1 H31 V27 H9Z M5.500 5 H1 V23 H5.500 M34.500 5 H39 V23 H34.500" />
        </svg>
      </TaskCell>
      <Pinned>
        {tasks.map((t) => (
          <TaskCell key={t.key} $w={98} $line={t.line} $active={t.active}>
            {t.icon}
          </TaskCell>
        ))}
      </Pinned>
      <Tray>
        <TaskCell $w={80}>
          <svg width="28" height="30" viewBox="0 0 28 30" fill="none" stroke="#fff" strokeWidth="2">
            <circle cx="19.500" cy="6" r="5" />
            <path d="M12.500 14 Q15 11.500 19.500 11.500 Q26 12 27 18" />
            <circle cx="8" cy="17.500" r="5" />
            <path d="M1 30 Q1.500 23 8 23 Q14.500 23 15.500 30" />
          </svg>
        </TaskCell>
        <TaskCell $w={80}>
          <svg width="26" height="14" viewBox="0 0 26 14" fill="none" stroke="#fff" strokeWidth="2">
            <path d="M1 13 L13 1.500 L25 13" />
          </svg>
        </TaskCell>
        <TaskCell $w={50}>
          <svg width="30" height="18" viewBox="0 0 30 18">
            <path d="M1 1 H27 V17 H1Z M29 6 V12" fill="none" stroke="#fff" strokeWidth="2" />
            <rect x="4" y="4" width="10" height="10" fill="#fff" />
          </svg>
        </TaskCell>
        <TaskCell $w={80}>
          <svg width="26" height="26" viewBox="0 0 26 26" fill="none" stroke="#fff" strokeWidth="1.800">
            <path d="M1.500 25 Q2 3 25 2 M7 25 Q7.500 9 25 8 M13 25 Q13.500 15 25 14" />
            <circle cx="21.500" cy="21.500" r="3" fill="#fff" stroke="none" />
          </svg>
        </TaskCell>
        <TaskCell $w={44}>
          <svg width="34" height="28" viewBox="0 0 34 28" fill="none" stroke="#fff" strokeWidth="2">
            <path d="M2 9 H6 L12 3 V25 L6 19 H2Z M17 9.500 Q20 14 17 18.500 M22 6 Q27 14 22 22 M27 2 Q36 14 27 26" />
          </svg>
        </TaskCell>
        <TaskCell $w={98}>
          <svg width="32" height="33" viewBox="0 0 32 33" fill="none" stroke="#fff" strokeWidth="2.200">
            <path d="M24 2 Q28 1 27 5 L18 23 L11 31 L12 19 L21 4Z M14 18 L18 21" />
            <path d="M10 20 Q2 20 1.500 25 Q1.500 31 9 31 M27 13 Q32 15 30 18 Q27 21 22 20" />
          </svg>
        </TaskCell>
        <TaskCell $w={64}>
          <svg width="46" height="26" viewBox="0 0 46 26" fill="none" stroke="#fff" strokeWidth="2">
            <rect x="1" y="1" width="44" height="24" rx="1" />
            <path d="M6 7.500 H41 M14 13 H34" strokeDasharray="2.500 1.600" />
            <path d="M6 13 H11 M35 13 H40 M6 19 H11 M14 19 H32 M35 19 H40" />
          </svg>
        </TaskCell>
        <Clock>
          <Fit text="1:32 AM" w={88} size={24} color="#fff" />
          <Fit text="5/22/2018" w={109} size={24} color="#fff" />
        </Clock>
        <TaskCell $w={62}>
          <svg width="34" height="32" viewBox="0 0 34 32" fill="none" stroke="#fff" strokeWidth="2">
            <path d="M1.500 1 H32.500 V25.500 H22 L17 30.500 L12 25.500 H1.500Z" />
          </svg>
        </TaskCell>
        <ShowDesktop />
      </Tray>
    </Taskbar>
  );
}

export default function App() {
  return (
    <Screen>
      <GlobalStyle />
      <BrowserChrome />
      <WebPage />
      <TaskbarRow />
    </Screen>
  );
}
